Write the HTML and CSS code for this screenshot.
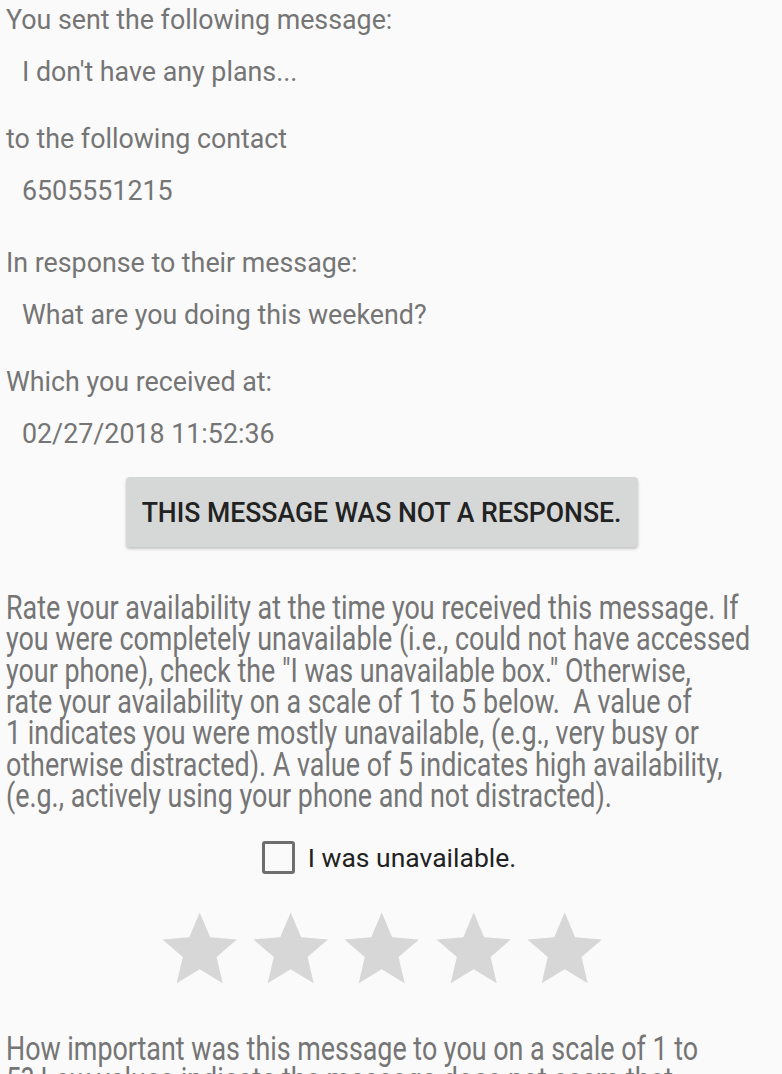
FILE: index.html
```html
<!DOCTYPE html>
<html>
<head>
<meta charset="utf-8">
<link rel="stylesheet" href="styles.css">
</head>
<body>
<div class="screen">
  <p class="label first">You sent the following message:</p>
  <p class="value">I don't have any plans...</p>
  <p class="label">to the following contact</p>
  <p class="value">6505551215</p>
  <p class="label wide">In response to their message:</p>
  <p class="value">What are you doing this weekend?</p>
  <p class="label">Which you received at:</p>
  <p class="value">02/27/2018 11:52:36</p>
  <div class="btn-row"><button class="btn"><span class="btn-text">THIS MESSAGE WAS NOT A RESPONSE.</span></button></div>
  <p class="para">Rate your availability at the time you received this message. If<br>you were completely unavailable (i.e., could not have accessed<br>your phone), check the "I was unavailable box." Otherwise,<br>rate your availability on a scale of 1 to 5 below.&nbsp; A value of<br>1 indicates you were mostly unavailable, (e.g., very busy or<br>otherwise distracted). A value of 5 indicates high availability,<br>(e.g., actively using your phone and not distracted).</p>
  <div class="check-row"><span class="box"></span><span class="check-label">I was unavailable.</span></div>
  <div class="stars">
    <svg class="star" viewBox="0 0 24 24"><path d="M12 17.27L18.18 21l-1.64-7.03L22 9.24l-7.19-.61L12 2 9.19 8.63 2 9.24l5.46 4.73L5.82 21z"/></svg>
    <svg class="star" viewBox="0 0 24 24"><path d="M12 17.27L18.18 21l-1.64-7.03L22 9.24l-7.19-.61L12 2 9.19 8.63 2 9.24l5.46 4.73L5.82 21z"/></svg>
    <svg class="star" viewBox="0 0 24 24"><path d="M12 17.27L18.18 21l-1.64-7.03L22 9.24l-7.19-.61L12 2 9.19 8.63 2 9.24l5.46 4.73L5.82 21z"/></svg>
    <svg class="star" viewBox="0 0 24 24"><path d="M12 17.27L18.18 21l-1.64-7.03L22 9.24l-7.19-.61L12 2 9.19 8.63 2 9.24l5.46 4.73L5.82 21z"/></svg>
    <svg class="star" viewBox="0 0 24 24"><path d="M12 17.27L18.18 21l-1.64-7.03L22 9.24l-7.19-.61L12 2 9.19 8.63 2 9.24l5.46 4.73L5.82 21z"/></svg>
  </div>
  <p class="para last">How important was this message to you on a scale of 1 to<br>5? Low values indicate the message does not seem that<br>important to you.</p>
</div>
</body>
</html>
```
FILE: styles.css
```css
html, body {
  margin: 0;
  padding: 0;
  background: #fafafa;
  overflow: hidden;
  height: 1074px;
}
.screen {
  font-family: Roboto, "Noto Sans", sans-serif;
  color: #757575;
  padding: 0 24px 0 6px;
}
p { margin: 0; }
.label {
  font-size: 26.8px;
  line-height: 32px;
  margin-top: 35px;
  white-space: nowrap;
}
.label.first { margin-top: 4px; }
.label.wide { margin-top: 40px; }
.value {
  font-size: 26.8px;
  line-height: 32px;
  margin-top: 20px;
  padding-left: 16px;
  white-space: nowrap;
}
.btn-row {
  display: flex;
  justify-content: center;
  margin-top: 27px;
}
.btn {
  width: 512px;
  height: 70px;
  background: #d6d7d7;
  border: none;
  border-radius: 4px;
  box-shadow: 0 2px 3px rgba(0,0,0,0.22);
  font-family: Roboto, sans-serif;
  font-weight: 500;
  font-size: 28px;
  color: #222222;
  padding: 0;
  display: flex;
  align-items: center;
  justify-content: center;
}
.btn-text {
  display: inline-block;
  white-space: nowrap;
  transform: scaleX(0.95);
}
.para {
  font-size: 33px;
  line-height: 31.33px;
  margin-top: 45px;
  white-space: nowrap;
  transform: scaleX(0.814);
  transform-origin: left top;
}
.check-row {
  display: flex;
  align-items: center;
  justify-content: center;
  gap: 13px;
  margin-top: 30px;
  padding-left: 14px;
}
.box {
  width: 33px;
  height: 33px;
  border: 3px solid #6e6e6e;
  border-radius: 3px;
  box-sizing: border-box;
}
.check-label {
  font-size: 26.5px;
  line-height: 32px;
  color: #222222;
}
.stars {
  display: flex;
  justify-content: center;
  gap: 1.85px;
  margin-top: 31px;
}
.star {
  width: 89.4px;
  height: 89.4px;
  fill: #d7d7d7;
}
.para.last { margin-top: 38px; }
```
